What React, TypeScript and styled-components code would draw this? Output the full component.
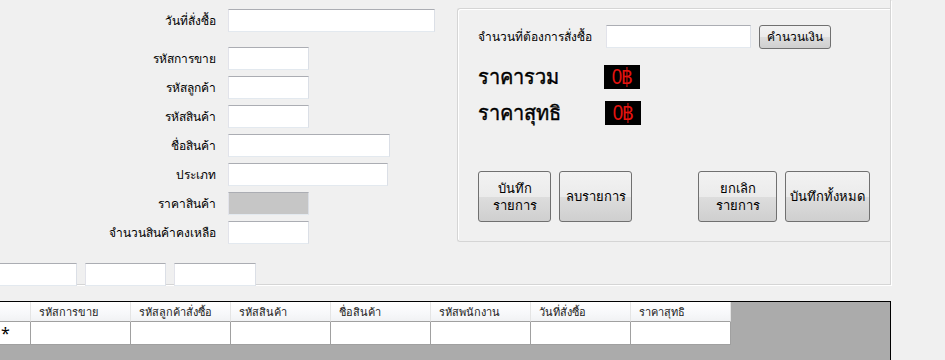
import React from "react";
import styled, { createGlobalStyle } from "styled-components";

const GlobalStyle = createGlobalStyle`
  html, body {
    margin: 0;
    padding: 0;
    background: #f0f0f0;
  }
  body {
    font-family: Tahoma, "Noto Sans", "DejaVu Sans", sans-serif;
    font-size: 12px;
    color: #000;
  }
`;

const Screen = styled.div`
  width: 945px;
  height: 360px;
  overflow: hidden;
  background: #f0f0f0;
`;

const OuterGroup = styled.div`
  width: 890px;
  height: 284px;
  display: grid;
  grid-template-columns: 457px 1fr;
  grid-template-rows: 1fr auto;
  border-right: 1px solid #d5d5d5;
  border-bottom: 1px solid #d5d5d5;
  box-shadow: 1px 1px 0 #fff;
`;

const FormColumn = styled.div`
  display: grid;
  grid-template-columns: 216px auto;
  grid-template-rows: 32px;
  grid-auto-rows: 23px;
  column-gap: 12px;
  row-gap: 6px;
  padding-top: 9px;
  align-content: start;
  align-items: start;
`;

const Label = styled.label`
  justify-self: end;
  line-height: 23px;
  white-space: nowrap;
`;

const TextBox = styled.div<{ $w: number; $disabled?: boolean }>`
  width: ${(p) => p.$w}px;
  height: 23px;
  box-sizing: border-box;
  background: ${(p) => (p.$disabled ? "#c6c6c6" : "#fff")};
  border: 1px solid;
  border-color: #abadb3 #dbdfe6 #e3e9ef #e2e3ea;
`;

const BottomRow = styled.div`
  grid-column: 1 / 3;
  display: flex;
  align-items: flex-end;
  gap: 8px;
  margin-left: -1px;
  margin-bottom: -2px;
`;

const InnerGroup = styled.div`
  margin-top: 8px;
  height: 234px;
  box-sizing: border-box;
  border: 1px solid #d5d5d5;
  border-right: none;
  border-radius: 3px 0 0 3px;
  box-shadow: inset 1px 1px 0 #fff;
  padding: 15px 20px 0 20px;
  display: flex;
  flex-direction: column;
`;

const QtyRow = styled.div`
  display: flex;
  align-items: center;
  height: 25px;
`;

const SmallLabel = styled.span`
  width: 128px;
  white-space: nowrap;
`;

const Bevel = styled.button`
  font: inherit;
  padding: 0;
  color: #000;
  border: 1px solid #707070;
  border-radius: 3px;
  background: linear-gradient(#f2f2f2 0%, #ebebeb 50%, #dddddd 51%, #cfcfcf 100%);
`;

const CalcButton = styled(Bevel)`
  margin-left: 8px;
  width: 72px;
  height: 24px;
`;

const PriceRow = styled.div<{ $top: number }>`
  display: flex;
  align-items: center;
  height: 25px;
  margin-top: ${(p) => p.$top}px;
`;

const BigLabel = styled.span`
  width: 126px;
  font-size: 20px;
  -webkit-text-stroke: 0.4px #000;
  white-space: nowrap;
`;

const Display = styled.div<{ $offset?: number }>`
  margin-left: ${(p) => p.$offset ?? 0}px;
  width: 36px;
  height: 24px;
  background: #000;
  display: flex;
  align-items: center;
  justify-content: center;
`;

const Digits = styled.span`
  color: #e5130f;
  font-family: "Liberation Sans", sans-serif;
  font-size: 22px;
  line-height: 24px;
  letter-spacing: -1px;
  transform: scaleX(0.85);
`;

const ButtonRow = styled.div`
  display: flex;
  margin-top: auto;
  margin-bottom: 19px;
  gap: 8px;
`;

const ActionButton = styled(Bevel)<{ $w: number; $gapBefore?: number }>`
  width: ${(p) => p.$w}px;
  height: 51px;
  margin-left: ${(p) => p.$gapBefore ?? 0}px;
  font-size: 13px;
  line-height: 17px;
  padding: 0 2px;
`;

const GridView = styled.div`
  margin-top: 16px;
  width: 891px;
  height: 60px;
  box-sizing: border-box;
  background: #ababab;
  border-top: 1px solid #000;
  border-right: 1px solid #000;
`;

const GridTable = styled.div`
  display: grid;
  grid-template-columns: 31px repeat(7, 100px);
  grid-template-rows: 20px 23px;
  width: 731px;
  font-size: 11px;
`;

const HeaderCell = styled.div`
  background: linear-gradient(#ffffff 0%, #f7f8fa 60%, #f1f2f4 100%);
  border-right: 1px solid #e4e4e4;
  border-bottom: 1px solid #a0a0a0;
  padding-left: 8px;
  display: flex;
  align-items: center;
  white-space: nowrap;
  overflow: hidden;
  color: #222;
`;

const RowHeader = styled.div`
  background: #fff;
  border-right: 1px solid #a0a0a0;
  border-bottom: 1px solid #a0a0a0;
  display: flex;
  align-items: center;
  padding-left: 1px;
  font-size: 16px;
`;

const Cell = styled.div`
  background: #fff;
  border-right: 1px solid #a0a0a0;
  border-bottom: 1px solid #a0a0a0;
`;

const fields: { label: string; w: number; disabled?: boolean }[] = [
  { label: "วันที่สั่งซื้อ", w: 207 },
  { label: "รหัสการขาย", w: 81 },
  { label: "รหัสลูกค้า", w: 81 },
  { label: "รหัสสินค้า", w: 81 },
  { label: "ชื่อสินค้า", w: 162 },
  { label: "ประเภท", w: 160 },
  { label: "ราคาสินค้า", w: 81, disabled: true },
  { label: "จำนวนสินค้าคงเหลือ", w: 81 },
];

const columns = [
  "รหัสการขาย",
  "รหัสลูกค้าสั่งซื้อ",
  "รหัสสินค้า",
  "ชื่อสินค้า",
  "รหัสพนักงาน",
  "วันที่สั่งซื้อ",
  "ราคาสุทธิ",
];

export default function App() {
  return (
    <Screen>
      <GlobalStyle />
      <OuterGroup>
        <FormColumn>
          {fields.map((f) => (
            <React.Fragment key={f.label}>
              <Label>{f.label}</Label>
              <TextBox $w={f.w} $disabled={f.disabled} />
            </React.Fragment>
          ))}
        </FormColumn>

        <InnerGroup>
          <QtyRow>
            <SmallLabel>จำนวนที่ต้องการสั่งซื้อ</SmallLabel>
            <TextBox $w={145} />
            <CalcButton>คำนวนเงิน</CalcButton>
          </QtyRow>
          <PriceRow $top={15}>
            <BigLabel>ราคารวม</BigLabel>
            <Display>
              <Digits>0฿</Digits>
            </Display>
          </PriceRow>
          <PriceRow $top={11}>
            <BigLabel>ราคาสุทธิ</BigLabel>
            <Display $offset={1}>
              <Digits>0฿</Digits>
            </Display>
          </PriceRow>
          <ButtonRow>
            <ActionButton $w={73}>บันทึก<br />รายการ</ActionButton>
            <ActionButton $w={73}>ลบรายการ</ActionButton>
            <ActionButton $w={79} $gapBefore={58}>ยกเลิก<br />รายการ</ActionButton>
            <ActionButton $w={85}>บันทึกทั้งหมด</ActionButton>
          </ButtonRow>
        </InnerGroup>

        <BottomRow>
          <TextBox $w={78} />
          <TextBox $w={81} />
          <TextBox $w={82} />
        </BottomRow>
      </OuterGroup>

      <GridView>
        <GridTable>
          <HeaderCell />
          {columns.map((c) => (
            <HeaderCell key={c}>{c}</HeaderCell>
          ))}
          <RowHeader>*</RowHeader>
          {columns.map((c) => (
            <Cell key={c} />
          ))}
        </GridTable>
      </GridView>
    </Screen>
  );
}
